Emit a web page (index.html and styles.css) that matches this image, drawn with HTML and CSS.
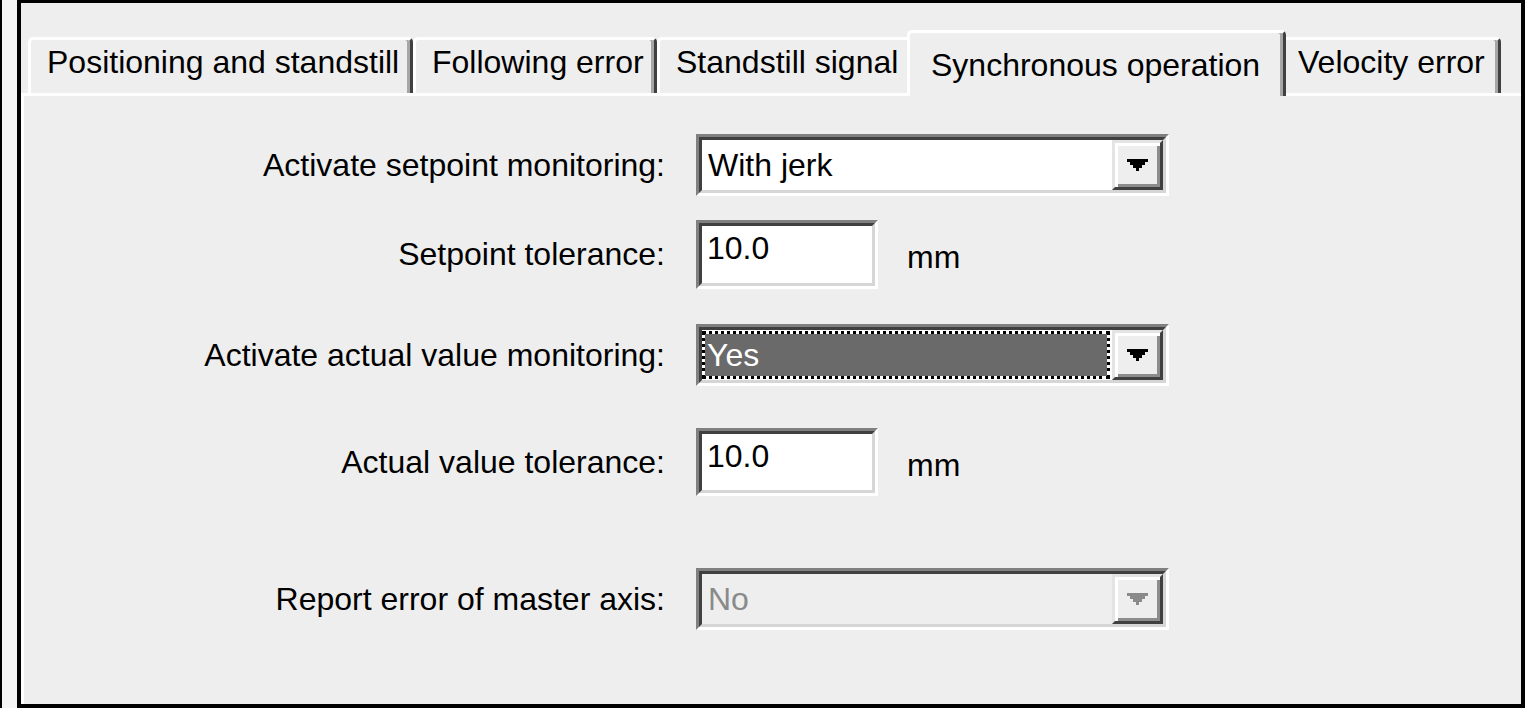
FILE: index.html
```html
<!DOCTYPE html>
<html>
<head>
<meta charset="utf-8">
<title>Synchronous operation</title>
<link rel="stylesheet" href="styles.css">
</head>
<body>
<div class="edge"></div>
<div class="frame">
  <div class="tabs">
    <div class="tab t1">Positioning and standstill</div>
    <div class="tab t2">Following error</div>
    <div class="tab t3">Standstill signal</div>
    <div class="tab active">Synchronous operation</div>
    <div class="tab t5">Velocity error</div>
  </div>
  <div class="panel">
    <div class="row r1">
      <div class="lbl">Activate setpoint monitoring:</div>
      <div class="combo">
        <div class="combo-in">
          <div class="field">With jerk</div>
          <div class="btn"><svg class="arrow" width="21" height="12" viewBox="0 0 21 12"><path d="M0 0H21V3H18V6H15V9H12V12H9V9H6V6H3V3H0Z"/></svg></div>
        </div>
      </div>
    </div>
    <div class="row r2">
      <div class="lbl">Setpoint tolerance:</div>
      <div class="tb"><div class="tb-in">10.0</div></div>
      <div class="unit">mm</div>
    </div>
    <div class="row r3">
      <div class="lbl">Activate actual value monitoring:</div>
      <div class="combo">
        <div class="combo-in">
          <div class="field sel">Yes</div>
          <div class="btn"><svg class="arrow" width="21" height="12" viewBox="0 0 21 12"><path d="M0 0H21V3H18V6H15V9H12V12H9V9H6V6H3V3H0Z"/></svg></div>
        </div>
      </div>
    </div>
    <div class="row r4">
      <div class="lbl">Actual value tolerance:</div>
      <div class="tb"><div class="tb-in">10.0</div></div>
      <div class="unit">mm</div>
    </div>
    <div class="row r5">
      <div class="lbl">Report error of master axis:</div>
      <div class="combo">
        <div class="combo-in dis">
          <div class="field">No</div>
          <div class="btn"><svg class="arrow" width="21" height="12" viewBox="0 0 21 12"><path d="M0 0H21V3H18V6H15V9H12V12H9V9H6V6H3V3H0Z"/></svg></div>
        </div>
      </div>
    </div>
  </div>
</div>
</body>
</html>
```
FILE: styles.css
```css
html, body {
  margin: 0;
  padding: 0;
}
body {
  display: flex;
  width: 1525px;
  height: 708px;
  overflow: hidden;
  background: #f3f3f3;
  font-family: "Liberation Sans", Arial, sans-serif;
  font-size: 32px;
  color: #000;
}
.edge {
  width: 15px;
  border-left: 2px solid #000;
  background: #f4f4f4;
}
.frame {
  flex: 1;
  display: flex;
  flex-direction: column;
  border: 4px solid #000;
  border-top-width: 3px;
  background: #eeeeee;
}
.tabs {
  display: flex;
  align-items: flex-end;
  height: 63px;
  margin-top: 27px;
  padding-left: 7px;
  position: relative;
  z-index: 1;
}
.tab {
  box-sizing: border-box;
  height: 56px;
  padding: 4px 0 0 16px;
  line-height: 37px;
  white-space: nowrap;
  background: #eeeeee;
  border-top: 3px solid #fff;
  border-left: 3px solid #fff;
  border-right: 3px solid #404040;
  border-radius: 5px 5px 0 0;
  box-shadow: inset -3px 0 0 #a6a6a6;
}
.t1 { width: 385px; }
.t2 { width: 244px; }
.t3 { width: 257px; margin-right: -7px; }
.t5 { width: 222px; margin-left: -7px; }
.active {
  width: 379px;
  height: 66px;
  margin-bottom: -3px;
  padding-top: 14px;
  padding-left: 21px;
  position: relative;
  z-index: 2;
}
.panel {
  flex: 1;
  border-top: 3px solid #fff;
  border-left: 3px solid #fff;
  padding-top: 38px;
}
.row {
  display: flex;
  align-items: center;
  height: 62px;
}
.r2 { height: 69px; margin-top: 24px; }
.r3 { margin-top: 35px; }
.r4 { height: 68px; margin-top: 42px; }
.r5 { margin-top: 72px; }
.lbl {
  width: 641px;
  margin-right: 31px;
  text-align: right;
  white-space: nowrap;
}
.combo {
  box-sizing: border-box;
  width: 473px;
  height: 62px;
  border: 3px solid;
  border-color: #808080 #fff #fff #808080;
}
.combo-in {
  box-sizing: border-box;
  height: 100%;
  display: flex;
  background: #fff;
  border: 3px solid;
  border-color: #404040 #d6d6d6 #d6d6d6 #404040;
}
.field {
  flex: 1;
  padding-left: 6px;
  line-height: 50px;
  white-space: nowrap;
}
.field.sel {
  box-sizing: border-box;
  margin: 1px 2px 1px 0;
  padding-left: 2px;
  line-height: 42px;
  color: #fff;
  background: #6a6a6a;
  background-clip: padding-box;
  border: 3px dotted #000;
}
.btn {
  box-sizing: border-box;
  width: 51px;
  display: flex;
  align-items: center;
  justify-content: center;
  background: #eeeeee;
  border: 3px solid;
  border-color: #e4e4e4 #404040 #404040 #e4e4e4;
  box-shadow: inset 3px 3px 0 #fff, inset -3px -3px 0 #8c8c8c;
}
.arrow path { fill: #000; }
.combo-in.dis { background: #eeeeee; }
.combo-in.dis .field { color: #8a8a8a; }
.combo-in.dis .arrow path { fill: #8a8a8a; }
.tb {
  box-sizing: border-box;
  width: 182px;
  height: 100%;
  border: 3px solid;
  border-color: #808080 #fff #fff #808080;
}
.tb-in {
  box-sizing: border-box;
  height: 100%;
  padding: 4px 0 0 5px;
  line-height: 37px;
  background: #fff;
  border: 3px solid;
  border-color: #404040 #d6d6d6 #d6d6d6 #404040;
}
.unit {
  margin-left: 29px;
  padding-top: 6px;
}
```
